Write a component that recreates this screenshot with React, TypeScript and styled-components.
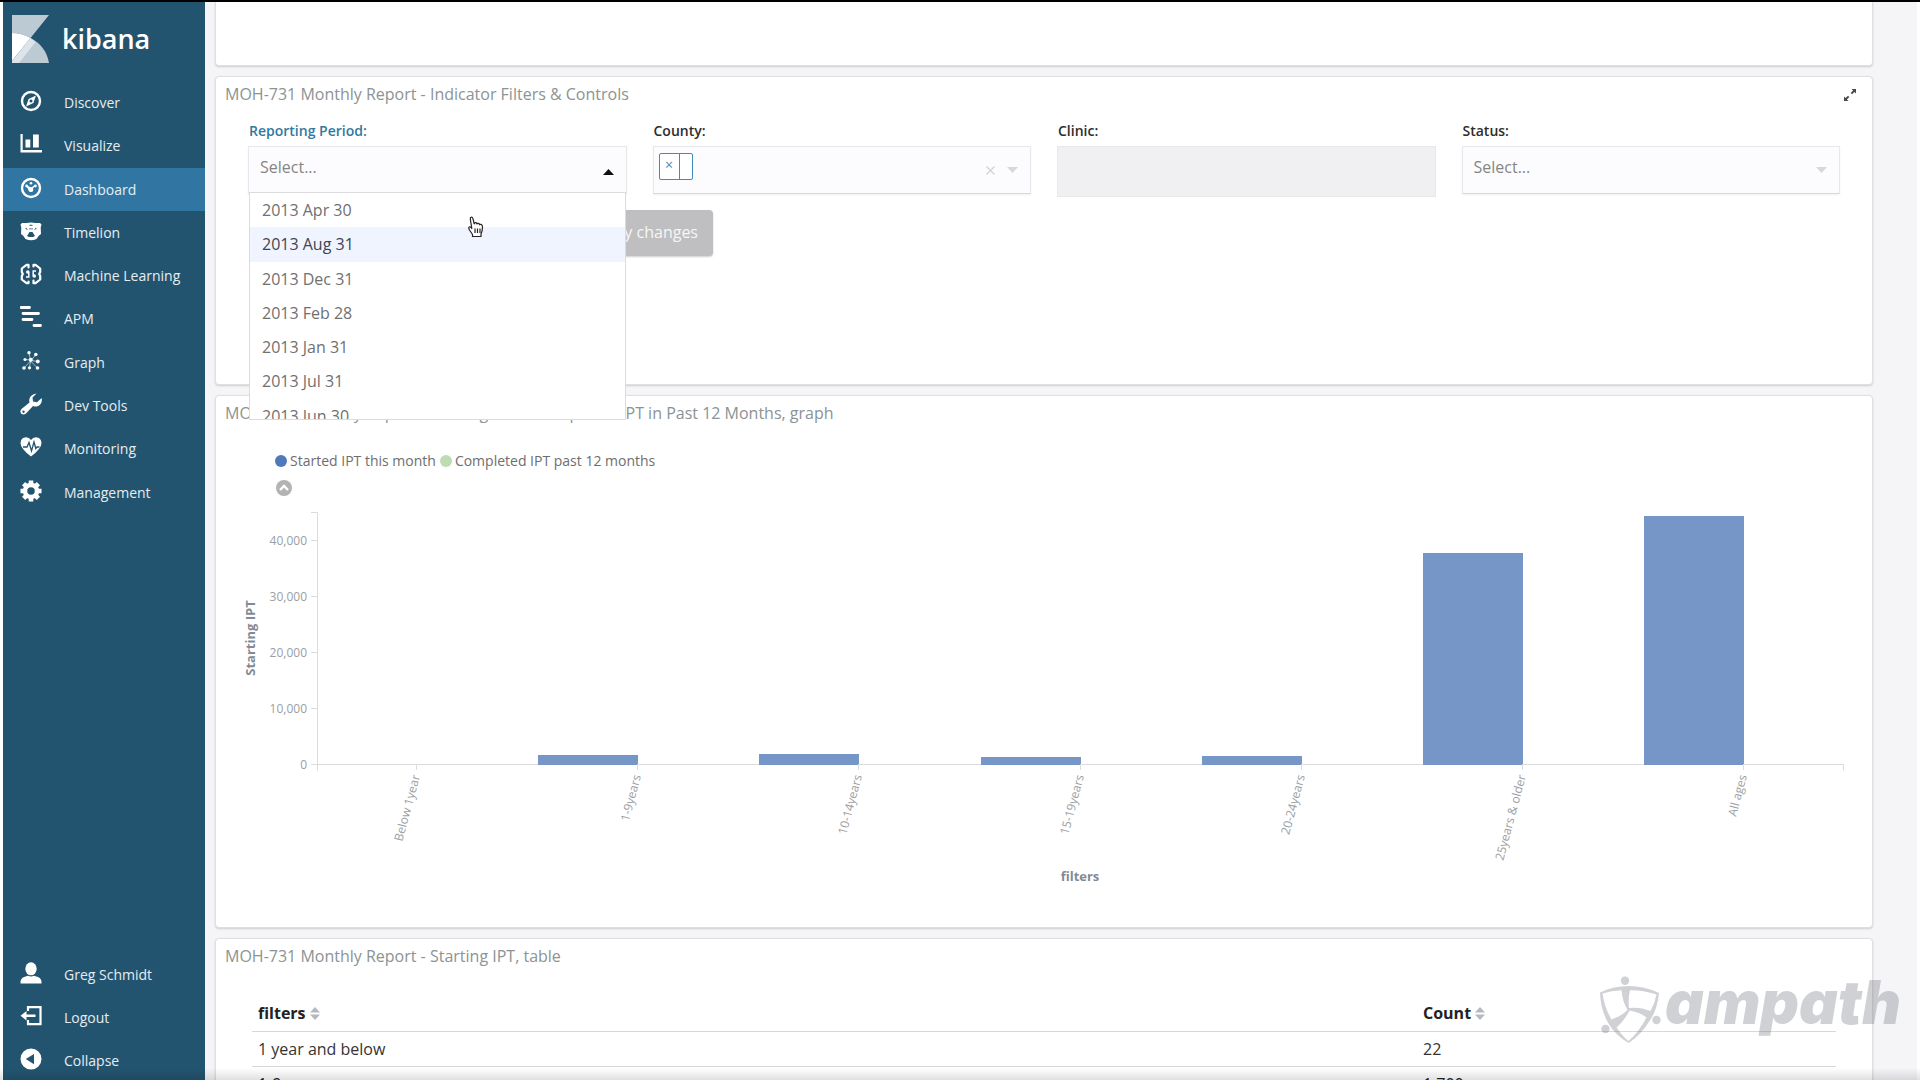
import React from "react";
import styled, { createGlobalStyle } from "styled-components";

const GlobalStyle = createGlobalStyle`
  *, *::before, *::after { box-sizing: border-box; }
  body { margin: 0; background: #fff; overflow: hidden; }
  body, button, input, select, table { font-family: "Open Sans", "Noto Sans", sans-serif; }
  ul { list-style: none; margin: 0; padding: 0; }
`;

const Page = styled.div`
  display: grid;
  grid-template-columns: 202px 1fr;
  height: 100vh;
  padding: 0 3px;
  border-top: 2px solid #000;
  overflow: hidden;
  position: relative;
`;

const Sidebar = styled.nav`
  display: flex;
  flex-direction: column;
  justify-content: space-between;
  margin-bottom: -2px;
  background: #23546f;
  overflow: hidden;
`;

const Brand = styled.a`
  display: flex;
  align-items: center;
  gap: 13px;
  height: 79px;
  padding: 0 0 5px 9px;
  color: #fff;
  font-size: 27px;
  font-weight: 600;
  line-height: 48px;
  text-decoration: none;
  svg { width: 37px; height: 48px; }
`;

const NavList = styled.ul<{ $height: number }>`
  display: grid;
  flex: none;
  grid-auto-rows: 1fr;
  height: ${(p) => p.$height}px;
`;

const NavLink = styled.a<{ $active?: boolean }>`
  display: flex;
  gap: 22px;
  height: 100%;
  padding: 9px 0 0 17px;
  background: ${(p) => (p.$active ? "#3175a2" : "transparent")};
  color: #e6edf1;
  font-size: 14px;
  line-height: 26px;
  text-decoration: none;
  white-space: nowrap;
  svg { width: 22px; height: 22px; color: #fff; flex: none; }
`;

const Main = styled.main`
  display: flex;
  flex-direction: column;
  gap: 10px;
  padding: 0 44px 0 10px;
  background: #f5f5f7;
  overflow: hidden;
`;

const Panel = styled.section<{ $height: number; $cut?: boolean }>`
  flex: none;
  min-height: ${(p) => p.$height}px;
  background: #fff;
  border: 1px solid #dfdfdf;
  border-width: ${(p) => (p.$cut ? "0 1px 1px" : "1px")};
  border-radius: ${(p) => (p.$cut ? "0 0 4px 4px" : "4px")};
  box-shadow: 0 1px 2px rgba(0, 0, 0, 0.16);
`;

const PanelHeader = styled.header`
  display: flex;
  justify-content: space-between;
  align-items: center;
  height: 36px;
  padding: 0 15px 0 9px;
`;

const PanelTitle = styled.h2`
  margin: 0;
  padding-bottom: 2px;
  color: #8b9394;
  font-size: 16px;
  font-weight: 400;
  line-height: 24px;
`;

const IconButton = styled.button`
  display: flex;
  padding: 0;
  border: 0;
  background: none;
  color: #4a4a4a;
`;

const Controls = styled.form`
  display: grid;
  grid-template-columns: repeat(4, 1fr);
  column-gap: 26px;
  padding: 6px 32px 0;
`;

const Label = styled.label<{ $active?: boolean }>`
  display: block;
  height: 27px;
  padding-left: 1px;
  color: ${(p) => (p.$active ? "#30799f" : "#2d2d2d")};
  font-size: 14px;
  font-weight: 600;
  line-height: 24px;
`;

const Field = styled.div`
  position: relative;
`;

const SelectShell = styled.div<{ $disabled?: boolean }>`
  display: flex;
  align-items: center;
  height: ${(p) => (p.$disabled ? 51 : 48)}px;
  border: 1px solid #e8e8ea;
  border-bottom-color: ${(p) => (p.$disabled ? "#e8e8ea" : "#d9d9db")};
  background: ${(p) => (p.$disabled ? "#f0f0f2" : "#fcfcfe")};
  box-shadow: ${(p) => (p.$disabled ? "none" : "0 1px 2px rgba(0, 0, 0, 0.06)")};
`;

const NativeSelect = styled.select`
  appearance: none;
  flex: 1;
  height: 100%;
  padding: 0 11px 6px;
  border: 0;
  outline: 0;
  background: transparent;
  color: #858585;
  font-size: 16px;
`;

const Caret = styled.svg<{ $open?: boolean }>`
  width: 11px;
  height: 6px;
  margin: ${(p) => (p.$open ? "3px 12px 0 0" : "0 12px 0 0")};
  fill: ${(p) => (p.$open ? "#111" : "#d8d8da")};
  flex: none;
`;

const Chip = styled.button`
  display: grid;
  grid-template-columns: 20px 12px;
  height: 27px;
  margin: 0 0 7px 5px;
  padding: 0;
  border: 1px solid #3f8dbb;
  border-radius: 2px;
  background: #fff;
  color: #3f8dbb;
  font-size: 14px;
  line-height: 22px;
  span { border-right: 1px solid #3f8dbb; }
`;

const ChipInput = styled.input`
  flex: 1;
  min-width: 0;
  border: 0;
  outline: 0;
  background: transparent;
  font-size: 16px;
`;

const ClearButton = styled.button`
  display: flex;
  margin-right: 12px;
  padding: 0;
  border: 0;
  background: none;
  color: #d3d3d6;
`;

const Menu = styled.div`
  position: absolute;
  top: 73px;
  left: 1px;
  right: 1px;
  z-index: 2;
  height: 228px;
  overflow: hidden;
  border: 1px solid #dcdcde;
  background: #fff;
`;

const Options = styled.ul`
  display: grid;
  grid-auto-rows: 1fr;
  height: 240px;
`;

const Option = styled.li<{ $focused?: boolean }>`
  padding: 0 12px;
  background: ${(p) => (p.$focused ? "#f0f4ff" : "#fff")};
  color: ${(p) => (p.$focused ? "#41454f" : "#707070")};
  font-size: 16px;
  line-height: 34px;
`;

const Pointer = styled.svg`
  position: absolute;
  top: 23px;
  right: 141px;
  width: 16px;
  height: 22px;
`;

const Actions = styled.div`
  display: flex;
  justify-content: flex-end;
  width: 497px;
  padding-top: 13px;
`;

const ApplyButton = styled.button`
  height: 46px;
  padding: 0 15px 2px;
  border: 0;
  border-radius: 4px;
  background: #bfbfc1;
  box-shadow: 0 1px 2px rgba(0, 0, 0, 0.2);
  color: #f6f6f6;
  font-size: 16px;
`;

const Legend = styled.ul`
  display: flex;
  gap: 4px;
  padding: 19px 59px 0;
  color: #6e6e70;
  font-size: 14px;
  line-height: 20px;
`;

const LegendItem = styled.li<{ $color: string }>`
  display: flex;
  align-items: center;
  gap: 3px;
  &::before {
    content: "";
    width: 12px;
    height: 12px;
    border-radius: 50%;
    background: ${(p) => p.$color};
  }
`;

const LegendToggle = styled.button`
  display: flex;
  margin: 9px 0 4px 60px;
  padding: 0;
  border: 0;
  background: none;
`;

const Chart = styled.svg`
  display: block;
  width: 100%;
  height: auto;
  fill: #9b9ea3;
  font-family: "Open Sans", sans-serif;
  font-size: 12px;
  .title { fill: #848a94; font-size: 13px; font-weight: 700; }
  line, path { stroke: #dcdcdc; fill: none; }
`;

const Table = styled.table`
  width: calc(100% - 72px);
  margin: 21px 36px 0;
  border-collapse: collapse;
  table-layout: fixed;
  color: #343434;
  font-size: 16px;
  line-height: 24px;
  th, td {
    height: 35px;
    padding: 0 6px;
    border-bottom: 1px solid #d8d8d8;
    text-align: left;
  }
  th:first-child { width: 1165px; }
  tr:nth-child(2) td { color: #222; }
`;

const SortButton = styled.button`
  display: flex;
  align-items: center;
  gap: 4px;
  padding: 0;
  border: 0;
  background: none;
  color: #222;
  font-size: 16px;
  font-weight: 700;
  line-height: 24px;
`;

const BottomShade = styled.div`
  position: absolute;
  right: 0;
  bottom: 0;
  left: 0;
  height: 12px;
  background: linear-gradient(rgba(0, 0, 0, 0), rgba(0, 0, 0, 0.12));
`;

const Watermark = styled.div`
  position: absolute;
  right: 19px;
  bottom: 34px;
  display: flex;
  align-items: flex-start;
  gap: 2px;
  opacity: 0.3;
  color: #656a74;
  font-family: Inter, sans-serif;
  font-size: 60px;
  font-style: italic;
  font-weight: 900;
  line-height: 52px;
  svg { width: 64px; height: 70px; }
`;

const icon = { viewBox: "0 0 22 22", fill: "currentColor", "aria-hidden": true } as const;
const stroke = { fill: "none", stroke: "currentColor" } as const;

const CompassIcon = () => (
  <svg {...icon}>
    <circle cx="11" cy="11" r="9" {...stroke} strokeWidth="2.4" />
    <path fillRule="evenodd" d="M16 5.6 13.4 13 6 16.4 8.6 9zM11.8 9.7a1.5 1.5 0 1 0-1.6 2.6 1.5 1.5 0 0 0 1.6-2.6z" />
  </svg>
);
const VisualizeIcon = () => (
  <svg {...icon}>
    <path d="M.5 1h2.2v16H22v2.400H.5zM5.500 6.500h4.800v8H5.500zM13 1.500h5.800v13H13z" />
  </svg>
);
const DashboardIcon = () => (
  <svg {...icon}>
    <circle cx="11" cy="11" r="9" {...stroke} strokeWidth="2.400" />
    <path d="M6 8.300 10.500 10a2.500 2.500 0 1 1-2.200 2.800z" />
    <circle cx="11" cy="6.300" r="1.300" />
    <circle cx="15.400" cy="9" r="1.400" />
    <circle cx="6.600" cy="9" r="1.400" />
    <path d="M11 12l4-3.500" {...stroke} strokeWidth="1.600" />
  </svg>
);
const TimelionIcon = () => (
  <svg {...icon}>
    <path
      fillRule="evenodd"
      d="M.5 4.500 2 3h5q4-1 8 0h5l1.500 1.500-.8 3 .3 6.500-2 1.500-2.500 3.500q-5.500 2.500-11 0L3 15.500 1 14l.3-6.500zM6 7.500 5.500 9l2.500 1zM16 7.500l.5 1.500-2.500 1zM9.500 4.800h3v1h-3zM9 8.500h4v.8H9zM9.500 12h3l1.500 2.500 1 1.500-2 1H9l-2-1 1-1.500z"
    />
  </svg>
);
const MachineIcon = () => (
  <svg {...icon}>
    <path
      d="M8.500 4.500V1.800L6.500 1.800 1.800 5.500v3.500l1 2-1 2v3.500l4.700 3.700h2V18.500M13.500 17.500v2.700h2l4.700-3.700V13l-1-2 1-2V5.500l-4.700-3.700h-2V3.500"
      {...stroke}
      strokeWidth="2.200"
      strokeLinejoin="round"
      strokeLinecap="round"
    />
    <path d="M6 14h2.800V9.500M16 8h-2.800v4.500" {...stroke} strokeWidth="1.500" />
    <circle cx="7.800" cy="9" r="1.800" />
    <circle cx="14.200" cy="13" r="1.800" />
  </svg>
);
const ApmIcon = () => (
  <svg {...icon}>
    <path d="M1 1.500h8.500M3 7.500h15.500M3 13.500h9M14 19.500h6.500" {...stroke} strokeWidth="2.800" strokeLinecap="round" />
  </svg>
);
const GraphIcon = () => (
  <svg {...icon}>
    <path d="M9 3l1.500 7M16 4.500l-5 6M5 9.500l5.500.5M18 11.500l-7-1M4 18l6.500-7M9.500 18l1-7M17.500 18l-7-7" {...stroke} strokeWidth=".6" />
    <circle cx="9" cy="2.800" r="1.700" />
    <circle cx="15.800" cy="4.500" r="1.800" />
    <circle cx="5" cy="9.500" r="1.600" />
    <circle cx="10.800" cy="9.800" r="2" />
    <circle cx="17.800" cy="11.500" r="1.900" />
    <circle cx="4" cy="18" r="1.800" />
    <circle cx="9.500" cy="17.800" r="1.600" />
    <circle cx="17.500" cy="18" r="1.800" />
  </svg>
);
const WrenchIcon = () => (
  <svg {...icon}>
    <path
      fillRule="evenodd"
      d="M16.500.5 12.500 4.500l.5 4 4 .8 4.700-4.300q.8 6-3.500 8-2.800 1-5.200 0L6 20.500Q3.500 22.500 1.300 20.800-.6 18.500 1.500 16L9.500 9.500Q8.500 5.500 11 3 13.500.5 16.500.5zM3.500 17.500a1.200 1.200 0 1 0 .1 2.400 1.200 1.200 0 0 0-.1-2.400z"
    />
  </svg>
);
const HeartIcon = () => (
  <svg {...icon}>
    <path d="M11 20.500Q.5 12.500.5 7 1 1.500 6 1.300q3.200 0 5 2.700 1.800-2.700 5-2.700 5 .2 5.500 5.700 0 5.500-10.500 13.500z" />
    <path d="M3 11h4l2-4.500 2.500 8.500 2.500-9 1.800 6.500 1.200-1.500h2.500" fill="none" stroke="#23546f" strokeWidth="1.300" />
  </svg>
);
const GearIcon = () => (
  <svg {...icon}>
    <g stroke="currentColor" strokeWidth="4.600">
      <path d="M11 .5v5M11 16.500v5M.5 11h5M16.500 11h5M3.600 3.600l3.400 3.400M15 15l3.400 3.400M3.600 18.400 7 15M15 7l3.400-3.400" />
    </g>
    <circle cx="11" cy="11" r="6" {...stroke} strokeWidth="4.500" />
  </svg>
);
const UserIcon = () => (
  <svg {...icon}>
    <ellipse cx="11" cy="6.800" rx="5.700" ry="6.500" />
    <path d="M.5 21.500q-.5-5 3.500-6.500l4-1.300q3 1.600 6 0l4 1.300q4 1.500 3.500 6.500z" />
  </svg>
);
const LogoutIcon = () => (
  <svg {...icon}>
    <path d="M8 6V2.200h12.500v17H8V15" {...stroke} strokeWidth="2.200" />
    <path d="M.5 10.700 6.500 6v3.500h9v2.400h-9v3.500z" />
  </svg>
);
const CollapseIcon = () => (
  <svg {...icon}>
    <path fillRule="evenodd" d="M11 .5a10.500 10.500 0 1 0 0 21 10.500 10.500 0 0 0 0-21zM14 6v10.200L5.800 11z" />
  </svg>
);

const KibanaLogo = () => (
  <svg viewBox="0 0 37 48" aria-hidden="true">
    <path d="M0 0h37L18.500 23Q10 18 0 18z" fill="#bccad4" />
    <path d="M18.500 23Q34 31 37 48H0z" fill="#bccad4" />
    <path d="M0 18q10 0 18.500 5L0 46z" fill="#fff" />
    <path d="M18.500 23l5 4L7 48H0v-2z" fill="#dde5ea" />
  </svg>
);

const AmpathMark = () => (
  <svg viewBox="0 0 64 70" fill="currentColor" aria-hidden="true">
    <circle cx="26" cy="4.700" r="4.200" />
    <circle cx="57.500" cy="44" r="4.200" />
    <circle cx="6.500" cy="53" r="4.200" />
    <path
      fillRule="evenodd"
      d="M1 16.500Q30 3.500 60 17 58.500 33 51.500 43.500 42 59 29.600 67 16 59 9.500 47.500 1.500 34 1 16.500zM3.500 17.500Q5.500 32 12.500 43.500 23 40 28.500 33.800 23.500 26 22.500 14.200 12 14.500 3.500 17.500zM31 14.200Q29 22 30 32q10-1.500 21.500 3Q56 27 57.500 18.500 44 14 31 14.200zM30.500 34.500Q26 44 17.500 51.500 24 61 29.600 65 40 56 47.500 41.500 41.500 36.500 30.500 34.500z"
    />
  </svg>
);

const Arrow = ({ open }: { open?: boolean }) => (
  <Caret $open={open} viewBox="0 0 11 6" aria-hidden="true">
    <path d={open ? "M0 6h11L5.500 0z" : "M0 0h11L5.500 6z"} />
  </Caret>
);

const SortIcon = () => (
  <svg width="10" height="13" viewBox="0 0 10 13" fill="#b4b8bf" aria-hidden="true">
    <path d="M0 5.500h10L5 0zM0 7.500h10L5 13z" />
  </svg>
);

const navItems = [
  { label: "Discover", Icon: CompassIcon },
  { label: "Visualize", Icon: VisualizeIcon },
  { label: "Dashboard", Icon: DashboardIcon, active: true },
  { label: "Timelion", Icon: TimelionIcon },
  { label: "Machine Learning", Icon: MachineIcon },
  { label: "APM", Icon: ApmIcon },
  { label: "Graph", Icon: GraphIcon },
  { label: "Dev Tools", Icon: WrenchIcon },
  { label: "Monitoring", Icon: HeartIcon },
  { label: "Management", Icon: GearIcon },
];
const userItems = [
  { label: "Greg Schmidt", Icon: UserIcon },
  { label: "Logout", Icon: LogoutIcon },
  { label: "Collapse", Icon: CollapseIcon },
];

type NavEntry = { label: string; Icon: React.ComponentType; active?: boolean };

const Nav = ({ items, height }: { items: NavEntry[]; height: number }) => (
  <NavList $height={height}>
    {items.map(({ label, Icon, active }) => (
      <li key={label}>
        <NavLink href="#" $active={active}>
          <Icon />
          {label}
        </NavLink>
      </li>
    ))}
  </NavList>
);

const periods = ["2013 Apr 30", "2013 Aug 31", "2013 Dec 31", "2013 Feb 28", "2013 Jan 31", "2013 Jul 31", "2013 Jun 30"];

const bars = [
  { label: "Below 1year", value: 22 },
  { label: "1-9years", value: 1700 },
  { label: "10-14years", value: 1900 },
  { label: "15-19years", value: 1400 },
  { label: "20-24years", value: 1600 },
  { label: "25years & older", value: 37800 },
  { label: "All ages", value: 44400 },
];

const AXIS_X = 101;
const AXIS_END = 1628;
const BASE_Y = 264;
const STEP = (AXIS_END - AXIS_X - 100) / 6.45;
const perUnit = 56 / 10000;

const BarChart = () => (
  <Chart viewBox="0 0 1656 400" role="img" aria-label="Starting IPT by filters">
    <path d={`M${AXIS_X - 6} 12.500h6.500V270.500`} />
    {[0, 10000, 20000, 30000, 40000].map((v) => {
      const y = Math.round(BASE_Y - v * perUnit);
      return (
        <g key={v}>
          <line x1={AXIS_X - 6} x2={AXIS_X} y1={y + 0.5} y2={y + 0.5} />
          <text x={AXIS_X - 10} y={y + 5} textAnchor="end">
            {v.toLocaleString("en-US")}
          </text>
        </g>
      );
    })}
    <path d={`M${AXIS_X} ${BASE_Y + 0.5}H${AXIS_END - 0.5}V270.500`} />
    {bars.map((b, i) => {
      const x = Math.round(AXIS_X + 99 + i * STEP);
      const h = Math.round(b.value * perUnit);
      return (
        <g key={b.label}>
          {h > 0 && <rect x={x - 99} y={BASE_Y + 1 - h} width={100} height={h} fill="#7596c6" />}
          <line x1={x + 0.5} x2={x + 0.5} y1={BASE_Y} y2={BASE_Y + 6} />
          <text textAnchor="end" transform={`translate(${x + 4} 276) rotate(-75)`}>
            {b.label}
          </text>
        </g>
      );
    })}
    <text className="title" textAnchor="middle" transform="translate(39 138) rotate(-90)">
      Starting IPT
    </text>
    <text className="title" textAnchor="middle" x="864" y="381">
      filters
    </text>
  </Chart>
);

export default function App() {
  return (
    <>
      <GlobalStyle />
      <Page>
        <Sidebar>
          <div>
            <Brand href="#">
              <KibanaLogo />
              kibana
            </Brand>
            <Nav items={navItems} height={433} />
          </div>
          <Nav items={userItems} height={129} />
        </Sidebar>
        <Main>
          <Panel $height={64} $cut />
          <Panel $height={309}>
            <PanelHeader>
              <PanelTitle>MOH-731 Monthly Report - Indicator Filters &amp; Controls</PanelTitle>
              <IconButton type="button" aria-label="Expand panel">
                <svg width="14" height="14" viewBox="0 0 14 14" fill="currentColor">
                  <path d="M8.500 1H13v4.500l-1.600-1.600L9 6.300 7.700 5l2.400-2.400zM5.500 13H1V8.500l1.600 1.600L5 7.700 6.300 9l-2.400 2.400z" />
                </svg>
              </IconButton>
            </PanelHeader>
            <Controls>
              <Field>
                <Label $active htmlFor="period">Reporting Period:</Label>
                <SelectShell>
                  <NativeSelect id="period"><option>Select...</option></NativeSelect>
                  <Arrow open />
                </SelectShell>
                <Menu>
                  <Options role="listbox" aria-label="Reporting Period">
                    {periods.map((p, i) => (
                      <Option key={p} role="option" aria-selected={i === 1} $focused={i === 1}>{p}</Option>
                    ))}
                  </Options>
                  <Pointer viewBox="0 0 16 22" fill="#fff" stroke="#222" strokeWidth="1.200" strokeLinejoin="round">
                    <path d="M4.500 20.500v-2L1.500 14Q.2 11.500 1.300 11q1.200-.5 2.500 1.500L2.300 3Q2.200 1.200 3.400 1q1.200 0 1.600 1.800l1.200 5q.3-1.300 1.500-1.100 1.200.2 1.200 1.300.5-.8 1.500-.6 1 .2 1.200 1.300.5-.6 1.500-.3 1.400.5 1.400 2.800 0 3.500-1.500 6.800v2.500z" />
                    <path d="M7 12.500v4.500M9.500 12.500v4.500M12 12.500v4.500" />
                  </Pointer>
                </Menu>
              </Field>
              <Field>
                <Label htmlFor="county">County:</Label>
                <SelectShell>
                  <Chip type="button" aria-label="Remove county"><span>×</span></Chip>
                  <ChipInput id="county" type="text" />
                  <ClearButton type="button" aria-label="Clear county">
                    <svg width="9" height="9" viewBox="0 0 9 9" fill="none" stroke="currentColor" strokeWidth="1.300">
                      <path d="M.5.5l8 8M8.500.5l-8 8" />
                    </svg>
                  </ClearButton>
                  <Arrow />
                </SelectShell>
              </Field>
              <Field>
                <Label htmlFor="clinic">Clinic:</Label>
                <SelectShell $disabled>
                  <NativeSelect id="clinic" disabled />
                </SelectShell>
              </Field>
              <Field>
                <Label htmlFor="status">Status:</Label>
                <SelectShell>
                  <NativeSelect id="status"><option>Select...</option></NativeSelect>
                  <Arrow />
                </SelectShell>
              </Field>
            </Controls>
            <Actions>
              <ApplyButton type="button">Apply changes</ApplyButton>
            </Actions>
          </Panel>
          <Panel $height={533}>
            <PanelHeader>
              <PanelTitle>MOH-731 Monthly Report - Starting IPT &amp; Completed IPT in Past 12 Months, graph</PanelTitle>
            </PanelHeader>
            <Legend>
              <LegendItem $color="#4f79bb">Started IPT this month</LegendItem>
              <LegendItem $color="#bfdbb1">Completed IPT past 12 months</LegendItem>
            </Legend>
            <LegendToggle type="button" aria-label="Toggle legend">
              <svg width="16" height="16" viewBox="0 0 16 16">
                <circle cx="8" cy="8" r="8" fill="#b3b3b3" />
                <path d="M4 10l4-4 4 4" fill="none" stroke="#fff" strokeWidth="2.400" />
              </svg>
            </LegendToggle>
            <BarChart />
          </Panel>
          <Panel $height={220}>
            <PanelHeader>
              <PanelTitle>MOH-731 Monthly Report - Starting IPT, table</PanelTitle>
            </PanelHeader>
            <Table>
              <thead>
                <tr>
                  <th><SortButton type="button">filters <SortIcon /></SortButton></th>
                  <th><SortButton type="button">Count <SortIcon /></SortButton></th>
                </tr>
              </thead>
              <tbody>
                <tr><td>1 year and below</td><td>22</td></tr>
                <tr><td>1-9years</td><td>1,700</td></tr>
              </tbody>
            </Table>
          </Panel>
        </Main>
        <Watermark>
          <AmpathMark />
          ampath
        </Watermark>
        <BottomShade />
      </Page>
    </>
  );
}
